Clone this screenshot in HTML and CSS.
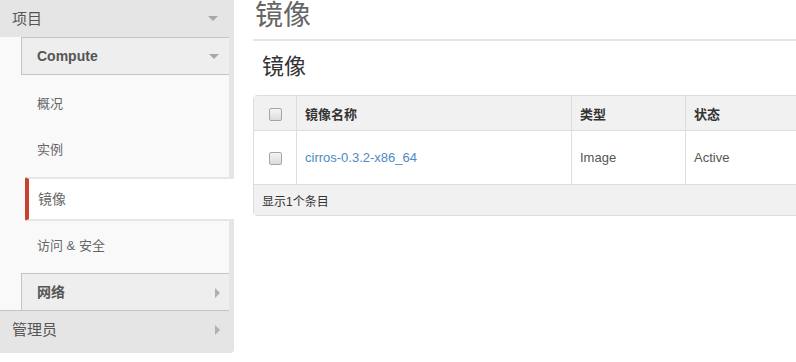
FILE: index.html
```html
<!DOCTYPE html>
<html lang="zh">
<head>
    <meta charset="UTF-8">
    <title>镜像</title>
    <link rel="stylesheet" href="styles.css">
</head>
<body>
    <div class="page">
        <div class="sidebar">
            <div class="group-title">项目 <span class="caret-down"></span></div>
            <div class="group-body">
                <div class="panel-title open">Compute <span class="caret-down"></span></div>
                <ul class="nav-list">
                    <li>概况</li>
                    <li>实例</li>
                    <li class="active">镜像</li>
                    <li>访问 &amp; 安全</li>
                </ul>
                <div class="panel-title">网络 <span class="caret-right"></span></div>
            </div>
            <div class="group-title closed">管理员 <span class="caret-right"></span></div>
        </div>

        <div class="main">
            <h1 class="page-header">镜像</h1>
            <h2 class="table-title">镜像</h2>
            <table class="data-table">
                <thead>
                    <tr>
                        <th class="col-check"><span class="checkbox"></span></th>
                        <th class="col-name">镜像名称</th>
                        <th class="col-type">类型</th>
                        <th class="col-status">状态</th>
                    </tr>
                </thead>
                <tbody>
                    <tr>
                        <td class="col-check"><span class="checkbox"></span></td>
                        <td><a href="#">cirros-0.3.2-x86_64</a></td>
                        <td>Image</td>
                        <td>Active</td>
                    </tr>
                </tbody>
                <tfoot>
                    <tr>
                        <td colspan="4">显示1个条目</td>
                    </tr>
                </tfoot>
            </table>
        </div>
    </div>
</body>
</html>
```

FILE: styles.css
```css
body, html {
    margin: 0;
    padding: 0;
    background: #fff;
    font-family: "Liberation Sans", "Noto Sans CJK SC", sans-serif;
    font-size: 13px;
    color: #555;
    overflow: hidden;
}

.page {
    display: flex;
    align-items: flex-start;
}

/* sidebar */
.sidebar {
    width: 234px;
    flex: none;
    background: #e5e5e5;
    border-bottom-right-radius: 4px;
}

.group-title {
    height: 37px;
    line-height: 37px;
    padding-left: 12px;
    font-size: 15px;
    color: #555;
    position: relative;
}

.group-title.closed {
    height: 42px;
    line-height: 38px;
}

.group-body {
    margin-right: 5px;
    background: #f9f9f9;
    border-bottom: 1px solid #c4c4c4;
}

.panel-title {
    margin-left: 21px;
    height: 36px;
    line-height: 36px;
    padding-left: 15px;
    background: #eee;
    border-top: 1px solid #c4c4c4;
    border-left: 1px solid #c4c4c4;
    font-weight: bold;
    font-size: 14px;
    color: #555;
    position: relative;
}

.panel-title.open {
    border-bottom: 1px solid #c4c4c4;
}

.caret-down {
    position: absolute;
    right: 16px;
    top: 16px;
    width: 0;
    height: 0;
    border-left: 5px solid transparent;
    border-right: 5px solid transparent;
    border-top: 5px solid #a8a8a8;
}

.panel-title .caret-down {
    right: 10px;
    top: 16px;
}

.caret-right {
    position: absolute;
    right: 14px;
    top: 14px;
    width: 0;
    height: 0;
    border-top: 5px solid transparent;
    border-bottom: 5px solid transparent;
    border-left: 5px solid #b0b0b0;
}

.panel-title .caret-right {
    right: 9px;
}

.nav-list {
    list-style: none;
    margin: 0;
    padding: 6px 0 4px;
}

.nav-list li {
    height: 46px;
    line-height: 46px;
    padding-left: 37px;
    font-size: 13px;
    color: #666;
}

.nav-list li.active {
    margin: 4px -5px 2px 25px;
    height: 40px;
    line-height: 40px;
    padding-left: 9px;
    background: #fff;
    border-top: 2px solid #e6e6e6;
    border-bottom: 2px solid #e6e6e6;
    border-left: 4px solid #c9412f;
    border-radius: 2px 0 0 2px;
    font-size: 14px;
}

/* main content */
.main {
    flex: none;
    width: 543px;
    margin-left: 19px;
    overflow: hidden;
}

.page-header {
    margin: 0;
    height: 39px;
    line-height: 32px;
    padding-left: 2px;
    font-size: 28px;
    font-weight: normal;
    color: #666;
    border-bottom: 2px solid #e5e5e5;
}

.table-title {
    margin: 0;
    height: 54px;
    line-height: 52px;
    padding-left: 9px;
    font-size: 22px;
    font-weight: normal;
    color: #333;
}

.data-table {
    width: 640px;
    border-collapse: separate;
    border-spacing: 0;
    border: 1px solid #ddd;
    border-radius: 4px;
}

.data-table th,
.data-table td {
    text-align: left;
    padding: 0 8px;
    border-left: 1px solid #ddd;
}

.data-table th:first-child,
.data-table td:first-child {
    border-left: none;
}

.data-table thead th {
    height: 34px;
    background: #f1f1f1;
    font-weight: bold;
    color: #333;
    border-bottom: 1px solid #ddd;
}

.data-table tbody td {
    height: 53px;
    color: #555;
    border-bottom: 1px solid #ddd;
}

.data-table tfoot td {
    height: 30px;
    background: #f1f1f1;
    font-size: 12px;
    color: #333;
}

.data-table a {
    color: #4d8ac1;
    text-decoration: none;
}

.col-check {
    width: 26px;
    text-align: center !important;
}

.col-name {
    width: 258px;
}

.col-type {
    width: 97px;
}

.checkbox {
    display: inline-block;
    width: 11px;
    height: 11px;
    border: 1px solid #a5a5a5;
    border-radius: 2px;
    background: linear-gradient(#f4f4f4, #dcdcdc);
    vertical-align: middle;
}
```
